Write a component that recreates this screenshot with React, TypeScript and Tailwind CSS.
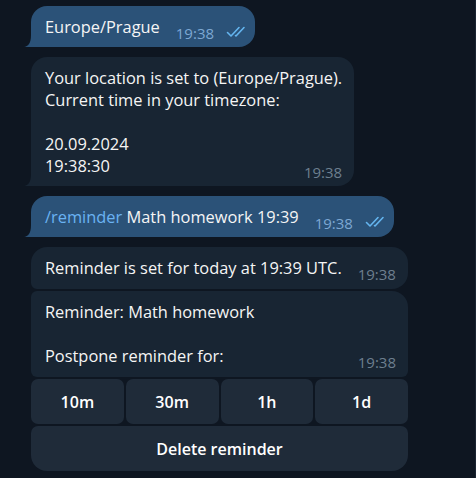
import type { ReactNode } from "react"

const Checks = () => (
  <svg width="20" height="12" viewBox="0 0 20 12" fill="none" className="mb-[5px] ml-[12px] shrink-0">
    <path d="M1.5 6.5 L5 10 L13 1.5" stroke="#64b5ef" strokeWidth="1.6" strokeLinecap="round" strokeLinejoin="round" />
    <path d="M9.5 9.5 L10 10 L18 1.5" stroke="#64b5ef" strokeWidth="1.6" strokeLinecap="round" strokeLinejoin="round" />
  </svg>
)

const Tail = ({ color }: { color: string }) => (
  <svg width="10" height="14" viewBox="0 0 10 14" className="absolute bottom-0 left-[-7px]">
    <path d="M0 14 C4 13.5 7 10.5 7 2 L7 0 L10 0 L10 14 Z" fill={color} />
  </svg>
)

const Time = ({ out, auto }: { out?: boolean; auto?: boolean }) => (
  <span
    className={
      "shrink-0 text-[15px] leading-[20px] " +
      (out ? "text-[#7da8d3] " : "text-[#6d7f8f] ") +
      (auto ? "ml-auto pl-[16px]" : "ml-[16px]")
    }
  >
    19:38
  </span>
)

type BubbleProps = {
  out?: boolean
  tail?: boolean
  radius: string
  lines?: string[]
  last: ReactNode
  className?: string
}

function Bubble({ out, tail, radius, lines = [], last, className = "" }: BubbleProps) {
  const bg = out ? "#2b5278" : "#182533"
  return (
    <div
      className={
        "relative flex flex-col pt-[10px] " +
        (out ? "bg-[#2b5278] pl-[14px] pr-[9px] " : "bg-[#182533] pl-[14px] pr-[12px] ") +
        radius +
        " " +
        className
      }
    >
      {lines.map((l, i) =>
        l === "" ? (
          <div key={i} className="h-[22px]" />
        ) : (
          <div key={i} className="leading-[22px] whitespace-nowrap">
            {l}
          </div>
        )
      )}
      <div className="flex items-end">
        <div className="mb-[5px] leading-[22px] whitespace-nowrap">{last}</div>
        <Time out={out} auto={lines.length > 0} />
        {out && <Checks />}
      </div>
      {tail && <Tail color={bg} />}
    </div>
  )
}

const buttons = ["10m", "30m", "1h", "1d"]

export default function App() {
  return (
    <div className="h-screen w-full overflow-hidden border-r border-[#1a2431] bg-[#0e1621] pl-[31px] pt-[6px] font-['Open_Sans',sans-serif] text-[16.4px] text-[#f5f5f5]">
      <div className="flex flex-col items-start">
        <Bubble out tail radius="rounded-[16px] rounded-bl-none pb-[4px]" last="Europe/Prague" />

        <Bubble
          tail
          radius="rounded-[16px] rounded-bl-none pb-[4px]"
          className="mt-[10px]"
          lines={["Your location is set to (Europe/Prague).", "Current time in your timezone:", "", "20.09.2024"]}
          last="19:38:30"
        />

        <Bubble
          out
          tail
          radius="rounded-[16px] rounded-bl-none pb-[4px]"
          className="mt-[10px]"
          last={
            <>
              <span className="text-[#6ab3f3]">/reminder</span> Math homework 19:39
            </>
          }
        />

        <Bubble
          radius="rounded-[16px] rounded-bl-[6px] pb-[5px]"
          className="mt-[10px]"
          last="Reminder is set for today at 19:39 UTC."
        />

        <div className="mt-[2px] flex w-[377px] flex-col gap-[2px]">
          <Bubble
            radius="rounded-[6px] rounded-tr-[16px] pb-[5px]"
            lines={["Reminder: Math homework", ""]}
            last="Postpone reminder for:"
          />
          <div className="grid grid-cols-4 gap-[2px]">
            {buttons.map((b) => (
              <button
                key={b}
                className="h-[45px] rounded-[7px] bg-[#1f2b39] text-[16px] font-semibold text-white"
              >
                {b}
              </button>
            ))}
          </div>
          <button className="h-[45px] rounded-[7px] rounded-b-[16px] bg-[#1f2b39] text-[16px] font-semibold text-white">
            Delete reminder
          </button>
        </div>
      </div>
    </div>
  )
}
